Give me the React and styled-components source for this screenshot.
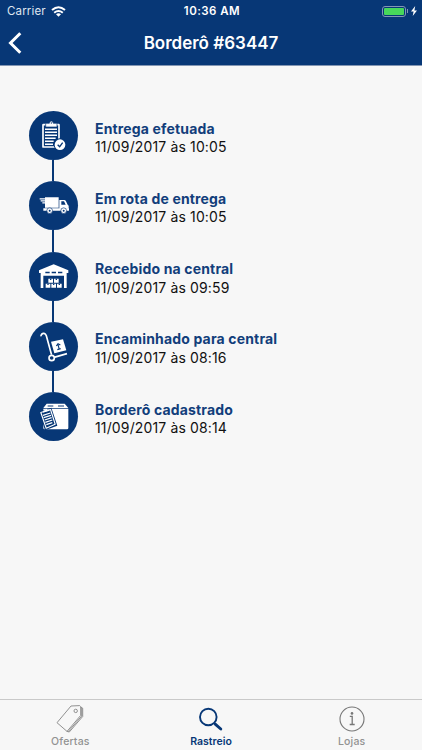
import React from 'react';
import styled, { createGlobalStyle } from 'styled-components';

const navy = '#073776';

const GlobalStyle = createGlobalStyle`
  * {
    box-sizing: border-box;
  }

  body {
    margin: 0;
    background: #f7f7f7;
    font-family: Inter, 'Liberation Sans', sans-serif;
  }
`;

const ClipboardCheckIcon = () => (
  <svg width="49" height="49" viewBox="11 11 147 147" fill="none">
    <rect x="53" y="52" width="48" height="67" rx="1" stroke="#fff" strokeWidth="5" />
    <path d="M61 48h11v-3h2a4 4 0 0 1 8 0h2v3h11v11H61z" fill="#fff" stroke={navy} strokeWidth="2" />
    <circle cx="78" cy="47" r="2" fill={navy} />
    <path d="M59 66h36M59 75h36M59 84h36M59 93h32M59 102h26M59 111h24" stroke="#fff" strokeWidth="4.500" />
    <circle cx="104" cy="112" r="19" fill={navy} />
    <circle cx="104" cy="112" r="16" fill="#fff" />
    <path d="M97 112l6 6 9-12" stroke={navy} strokeWidth="4" />
  </svg>
);

const TruckIcon = () => (
  <svg width="49" height="49" viewBox="11 11 147 147" fill="#fff">
    <path d="M59 60h41v31H59z" />
    <path d="M43 63h22v3.500H43zM46 69h19v3.500H46zM51 75h14v3.500H51z" />
    <path fillRule="evenodd" d="M102 68h15q3 0 5 4l5 10 3 3v9h-28zM108 72v10h13l-5-10z" />
    <path d="M54 93h77v7H54z" />
    <circle cx="73" cy="100" r="8.500" stroke={navy} strokeWidth="2" />
    <circle cx="73" cy="100" r="3" fill={navy} />
    <circle cx="115" cy="100" r="8.500" stroke={navy} strokeWidth="2" />
    <circle cx="115" cy="100" r="3" fill={navy} />
  </svg>
);

const WarehouseIcon = () => (
  <svg width="49" height="49" viewBox="11 11 147 147" fill="#fff">
    <path d="M85 48l44 18v8h-5v45h-8V82H54v37h-8V74h-5v-8z" />
    <path d="M60 70h13v5H60zM79 70h13v5H79zM98 70h13v5H98z" fill={navy} />
    <path d="M69 91h14v12H69zM86 91h14v12H86zM61 106h14v12H61zM78 106h14v12H78zM95 106h14v12H95z" />
    <path d="M74 91h4v4h-4zM91 91h4v4h-4zM66 106h4v4h-4zM83 106h4v4h-4zM100 106h4v4h-4z" fill={navy} />
  </svg>
);

const HandTruckIcon = () => (
  <svg width="49" height="49" viewBox="11 11 147 147" fill="none">
    <path d="M47 52q2-8 9-7 5 1 7 7l15 55" stroke="#fff" strokeWidth="5" strokeLinecap="round" />
    <path d="M77 70l36-7 10 33-36 9z" fill="#fff" />
    <path d="M101 90l-3-11M93 83l5-7 7 4M96 94l10-3" stroke={navy} strokeWidth="3.500" />
    <path d="M86 117l39-11" stroke="#fff" strokeWidth="5" />
    <circle cx="79" cy="119" r="8" fill={navy} stroke="#fff" strokeWidth="5" />
  </svg>
);

const BoxIcon = () => (
  <svg width="49" height="49" viewBox="11 11 147 147" fill="none">
    <path d="M64 46h54l11 13H54z" fill="#fff" />
    <path d="M67 53h17M98 53h18" stroke={navy} strokeWidth="3" />
    <path d="M54 61h75v58q0 4-4 4H58q-4 0-4-4z" fill="#fff" />
    <path d="M41 70l37-12 18 54-37 14z" fill={navy} />
    <path d="M46.500 72.500l29-9 14 44-27 12z" stroke="#fff" strokeWidth="3.500" strokeLinejoin="round" />
    <path d="M53 73l1-6 5-2 2-4 5 1 1 2 5-1 1 4z" fill="#fff" />
    <path d="M53 81l22-7M55 88l22-7M58 95l21-7M60 102l21-7M63 109l18-6" stroke="#fff" strokeWidth="3.500" />
  </svg>
);

const TagIcon = () => (
  <svg width="30" height="30" viewBox="0 0 30 30" fill="none" stroke="#858585" strokeWidth=".9" strokeLinejoin="round">
    <path d="M16 2l8.700-.4 1 1v8.800L12 27.400 2 18.700z" />
    <path d="M25.700 3.200l2 1v8.300L14.300 28l-2.300-.6M26.700 3.700v8.300L13.200 27.700" />
    <circle cx="20.700" cy="6.900" r="1.700" />
  </svg>
);

const SearchIcon = () => (
  <svg width="30" height="30" viewBox="0 0 30 30" fill="none" stroke={navy}>
    <circle cx="12.300" cy="13" r="8.300" strokeWidth="1.900" />
    <path d="M18 19l2 2" strokeWidth="2" />
    <path d="M19.500 20.300l5.300 4.700" strokeWidth="2.900" strokeLinecap="round" />
  </svg>
);

const InfoIcon = () => (
  <svg width="30" height="30" viewBox="0 0 30 30" fill="none" stroke="#777">
    <circle cx="15" cy="15" r="12" strokeWidth="1.100" />
    <path d="M12.800 12.300h2.400v8.200M12.700 20.500h5" strokeWidth="1.300" />
    <circle cx="15" cy="9.400" r="1.300" fill="#777" stroke="none" />
  </svg>
);

const steps = [
  { title: 'Entrega efetuada', date: '11/09/2017 às 10:05', icon: <ClipboardCheckIcon /> },
  { title: 'Em rota de entrega', date: '11/09/2017 às 10:05', icon: <TruckIcon /> },
  { title: 'Recebido na central', date: '11/09/2017 às 09:59', icon: <WarehouseIcon /> },
  { title: 'Encaminhado para central', date: '11/09/2017 às 08:16', icon: <HandTruckIcon /> },
  { title: 'Borderô cadastrado', date: '11/09/2017 às 08:14', icon: <BoxIcon /> },
];

const tabs = [
  { label: 'Ofertas', icon: <TagIcon /> },
  { label: 'Rastreio', icon: <SearchIcon />, active: true },
  { label: 'Lojas', icon: <InfoIcon /> },
];

const App = () => (
  <Screen>
    <GlobalStyle />
    <Header>
      <StatusBar>
        <Carrier>
          Carrier
          <svg width="15" height="11" viewBox="0 0 15 11" fill="none" stroke="#fff" strokeWidth="2">
            <path d="M1 4.100q6.500-5.600 13 0M3.200 6.700q4.300-3.500 8.600 0" />
            <path d="M5 8.200q2.500-1.900 5 0L7.500 10.700z" fill="#fff" stroke="none" />
          </svg>
        </Carrier>
        <Clock>10:36 AM</Clock>
        <Power>
          <Battery />
          <BatteryCap />
          <svg width="6" height="10" viewBox="0 0 6 10" fill="#fff">
            <path d="M4.200 0L0 5.500h2.600L1.700 10 6 4.400H3.400z" />
          </svg>
        </Power>
      </StatusBar>
      <NavBar>
        <BackButton aria-label="Voltar">
          <svg width="14" height="22" viewBox="0 0 14 22" fill="none" stroke="#fff" strokeWidth="3">
            <path d="M12.300 1.200L2.500 11l9.800 9.800" />
          </svg>
        </BackButton>
        <NavTitle>Borderô #63447</NavTitle>
      </NavBar>
    </Header>

    <Timeline>
      {steps.map((step) => (
        <Step key={step.title}>
          <Marker>{step.icon}</Marker>
          <StepText>
            <StepTitle>{step.title}</StepTitle>
            <StepDate>{step.date}</StepDate>
          </StepText>
        </Step>
      ))}
    </Timeline>

    <TabBar>
      {tabs.map((tab) => (
        <Tab key={tab.label} $active={tab.active}>
          {tab.icon}
          <span>{tab.label}</span>
        </Tab>
      ))}
    </TabBar>
  </Screen>
);

const Screen = styled.div`
  display: flex;
  flex-direction: column;
  height: 750px;
  overflow: hidden;
  background: #f7f7f7;
`;

const Header = styled.header`
  height: 66px;
  background: ${navy};
  border-bottom: 1px solid #8396b3;
  color: #fff;
`;

const StatusBar = styled.div`
  display: grid;
  grid-template-columns: 1fr auto 1fr;
  align-items: center;
  height: 22px;
  padding: 0 5px 0 7px;
`;

const Carrier = styled.div`
  display: flex;
  align-items: center;
  gap: 5px;
  font-size: 11.500px;
  letter-spacing: 0.15px;
  color: #dfe6f0;
`;

const Clock = styled.div`
  font-size: 11.500px;
  font-weight: 600;
  letter-spacing: 0.45px;
`;

const Power = styled.div`
  display: flex;
  align-items: center;
  justify-content: flex-end;

  svg {
    margin-left: 3px;
  }
`;

const Battery = styled.div`
  width: 24px;
  height: 11px;
  border: 1px solid #8397b5;
  border-radius: 3px;
  padding: 1px;

  &::before {
    content: '';
    display: block;
    height: 100%;
    border-radius: 1px;
    background: #47d85b;
  }
`;

const BatteryCap = styled.div`
  width: 1px;
  height: 4px;
  margin-left: 1px;
  background: #8397b5;
`;

const NavBar = styled.div`
  display: grid;
  grid-template-columns: 1fr auto 1fr;
  align-items: center;
  height: 42px;
`;

const BackButton = styled.button`
  display: flex;
  width: 30px;
  padding: 0 0 0 8px;
  border: 0;
  background: none;
`;

const NavTitle = styled.h1`
  margin: 0;
  font-size: 17px;
  font-weight: 600;
  line-height: 22px;
`;

const Timeline = styled.main`
  flex: 1;
  display: flex;
  flex-direction: column;
  padding: 45px 0 0 28.700px;
`;

const Step = styled.div`
  display: flex;
  height: 70.300px;
`;

const Marker = styled.div`
  display: flex;
  flex-direction: column;
  width: 49px;

  svg {
    flex: none;
    display: block;
    border-radius: 50%;
    background: ${navy};
  }

  ${Step}:not(:last-child) &::after {
    content: '';
    flex: 1;
    width: 2px;
    margin: 0 auto;
    background: ${navy};
  }
`;

const StepText = styled.div`
  padding: 8.500px 0 0 17.300px;
  font-size: 14px;
  line-height: 18.500px;
  letter-spacing: 0.14px;
  white-space: nowrap;
`;

const StepTitle = styled.div`
  font-weight: 700;
  letter-spacing: 0.16px;
  color: #123e7b;
`;

const StepDate = styled.div`
  color: #111;
`;

const TabBar = styled.nav`
  display: grid;
  grid-template-columns: repeat(3, 1fr);
  height: 51px;
  border-top: 1px solid #c9c9c9;
  background: #f7f7f7;
`;

const Tab = styled.div`
  display: flex;
  flex-direction: column;
  align-items: center;
  padding-top: 4px;
  font-size: 10.500px;
  font-weight: ${({ $active }) => ($active ? 600 : 500)};
  line-height: 16px;
  letter-spacing: ${({ $active }) => ($active ? '0' : '0.15px')};
  color: ${({ $active }) => ($active ? navy : '#929292')};
`;

export default App;
